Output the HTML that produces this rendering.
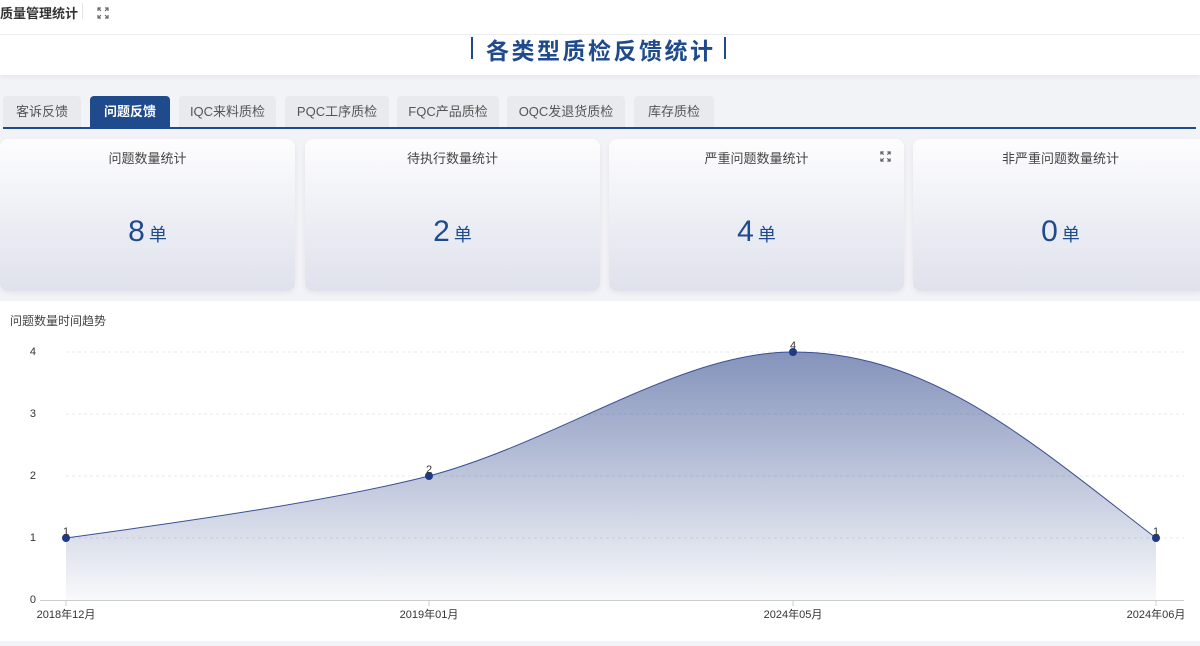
<!DOCTYPE html>
<html><head><meta charset="utf-8"><style>
body{margin:0;width:1200px;height:641px;overflow:hidden;background:#f2f3f7;font-family:"Liberation Sans","Noto Sans CJK SC",sans-serif;position:relative}
.top{position:absolute;left:0;top:0;width:1200px;height:34px;background:#fff;border-bottom:1px solid #eceef2}
.top .t{position:absolute;left:0;top:3px;font-size:13px;font-weight:bold;color:#333}
.top .sep{position:absolute;left:82px;top:3px;width:1px;height:16px;background:#e4e4e4}
.ban{position:absolute;left:0;top:35px;width:1200px;height:40px;background:#fff;box-shadow:0 2px 4px rgba(0,0,0,.05)}
.ban .h{position:absolute;left:470px;top:-3px;font-size:23px;font-weight:bold;color:#1f4a8c;letter-spacing:2.5px}
.ban .b{position:absolute;top:2px;width:2px;height:22px;background:#1f4a8c}
.tabs{position:absolute;left:3px;top:96px}
.tab{position:absolute;top:0;height:31px;line-height:31px;background:#e9eaee;border-radius:4px 4px 0 0;font-size:13px;color:#555;text-align:center}
.tab.on{background:#1f4a8c;color:#fff;font-weight:bold}
.line{position:absolute;left:3px;top:127px;width:1193px;height:2px;background:#1f4a8c}
.card{position:absolute;top:139px;height:152px;border-radius:8px;background:linear-gradient(#fdfdfe,#dfe1ec);box-shadow:0 2px 6px rgba(0,0,0,.06)}
.card .c{position:absolute;top:9px;width:100%;text-align:center;font-size:13px;color:#444}
.card .n{position:absolute;top:76px;width:100%;text-align:center;color:#1f4a8c;font-size:30px}
.card .n span{font-size:18px;margin-left:4px}
.chart{position:absolute;left:0;top:301px;width:1200px;height:340px;background:#fff}
</style></head><body>
<div class="top"><div class="t">质量管理统计</div><div class="sep"></div>
<svg style="position:absolute;left:97px;top:7px" width="12" height="12" viewBox="0 0 12 12" fill="none" stroke="#666" stroke-width="1.2"><path d="M1 4V1h3M8 1h3v3M11 8v3H8M4 11H1V8M1 1l3 3M11 1L8 4M11 11L8 8M1 11l3-3"/></svg></div>
<div class="ban"><div class="b" style="left:471px"></div><div class="h" style="left:486px">各类型质检反馈统计</div><div class="b" style="left:724px"></div></div>
<div class="tabs">
<div class="tab" style="left:0;width:78px">客诉反馈</div>
<div class="tab on" style="left:87px;width:80px">问题反馈</div>
<div class="tab" style="left:176px;width:97px">IQC来料质检</div>
<div class="tab" style="left:282px;width:104px">PQC工序质检</div>
<div class="tab" style="left:394px;width:102px">FQC产品质检</div>
<div class="tab" style="left:504px;width:118px">OQC发退货质检</div>
<div class="tab" style="left:631px;width:80px">库存质检</div>
</div>
<div class="line"></div>
<div class="card" style="left:0;width:295px"><div class="c">问题数量统计</div><div class="n">8<span>单</span></div></div>
<div class="card" style="left:305px;width:295px"><div class="c">待执行数量统计</div><div class="n">2<span>单</span></div></div>
<div class="card" style="left:609px;width:295px"><div class="c">严重问题数量统计</div><div class="n">4<span>单</span></div>
<svg style="position:absolute;left:271px;top:12px" width="11" height="11" viewBox="0 0 12 12" fill="none" stroke="#555" stroke-width="1.2"><path d="M1 4V1h3M8 1h3v3M11 8v3H8M4 11H1V8M1 1l3 3M11 1L8 4M11 11L8 8M1 11l3-3"/></svg></div>
<div class="card" style="left:913px;width:295px"><div class="c">非严重问题数量统计</div><div class="n">0<span>单</span></div></div>
<div class="chart">
<svg width="1200" height="340" style="font-family:'Liberation Sans','Noto Sans CJK SC',sans-serif">
<defs><linearGradient id="g" x1="0" y1="0" x2="0" y2="1"><stop offset="0" stop-color="#1f3a84" stop-opacity=".55"/><stop offset="1" stop-color="#1f3a84" stop-opacity="0.03"/></linearGradient></defs>
<text x="10" y="24" font-size="12" fill="#444">问题数量时间趋势</text>
<g stroke="#e8e8e8" stroke-dasharray="3,3"><line x1="66" y1="51" x2="1184" y2="51"/><line x1="66" y1="113" x2="1184" y2="113"/><line x1="66" y1="175" x2="1184" y2="175"/><line x1="66" y1="237" x2="1184" y2="237"/></g>
<line x1="40" y1="299.5" x2="1184" y2="299.5" stroke="#ccc"/>
<g font-size="11" fill="#333" text-anchor="end"><text x="36" y="54">4</text><text x="36" y="116">3</text><text x="36" y="178">2</text><text x="36" y="240">1</text><text x="36" y="302">0</text></g>
<path d="M66 237C190 220 330 200 429 175C560 140 680 51 793 51C930 51 1030 140 1156 237L1156 299L66 299Z" fill="url(#g)"/>
<path d="M66 237C190 220 330 200 429 175C560 140 680 51 793 51C930 51 1030 140 1156 237" fill="none" stroke="#3a4f93" stroke-width="1"/>
<g fill="#1f3a84"><circle cx="66" cy="237" r="4"/><circle cx="429" cy="175" r="4"/><circle cx="793" cy="51" r="4"/><circle cx="1156" cy="237" r="4"/></g>
<g font-size="11" fill="#333" text-anchor="middle"><text x="66" y="234">1</text><text x="429" y="172">2</text><text x="793" y="48">4</text><text x="1156" y="234">1</text>
<text x="66" y="317">2018年12月</text><text x="429" y="317">2019年01月</text><text x="793" y="317">2024年05月</text><text x="1156" y="317">2024年06月</text></g>
<g stroke="#ccc"><line x1="66" y1="300" x2="66" y2="305"/><line x1="429" y1="300" x2="429" y2="305"/><line x1="793" y1="300" x2="793" y2="305"/><line x1="1156" y1="300" x2="1156" y2="305"/></g>
</svg></div>
</body></html>
